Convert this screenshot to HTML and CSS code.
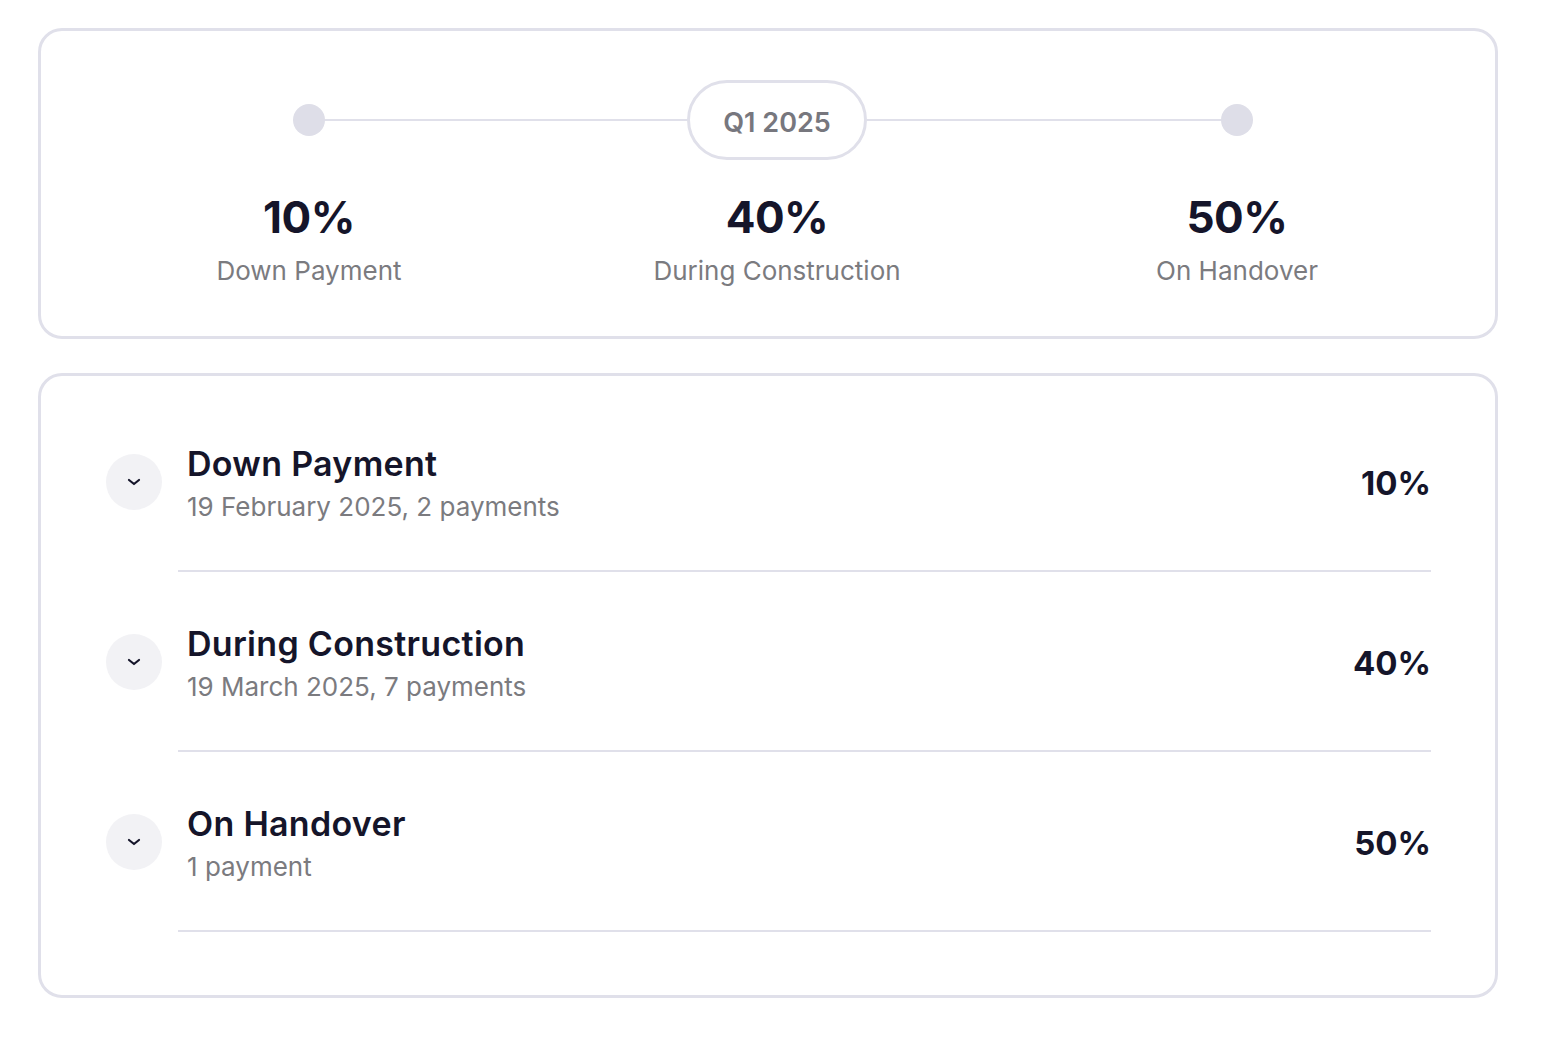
FILE: index.html
```html
<!DOCTYPE html>
<html lang="en">
<head>
<meta charset="utf-8">
<title>Payment plan</title>
<link rel="stylesheet" href="styles.css">
</head>
<body>
<div class="page">
  <section class="card summary">
    <div class="cols">
      <div class="col">
        <div class="track"><span class="seg seg-empty"></span><span class="dot"></span><span class="seg"></span></div>
        <div class="pct">10%</div>
        <div class="lbl">Down Payment</div>
      </div>
      <div class="col">
        <div class="track"><span class="seg"></span><span class="pill">Q1 2025</span><span class="seg"></span></div>
        <div class="pct">40%</div>
        <div class="lbl">During Construction</div>
      </div>
      <div class="col">
        <div class="track"><span class="seg"></span><span class="dot"></span><span class="seg seg-empty"></span></div>
        <div class="pct">50%</div>
        <div class="lbl">On Handover</div>
      </div>
    </div>
  </section>

  <section class="card list">
    <div class="row">
      <span class="chev"><svg width="14" height="8" viewBox="0 0 14 8"><path d="M2 2l5 4 5-4" fill="none" stroke="#15152a" stroke-width="2.2" stroke-linecap="round" stroke-linejoin="round"/></svg></span>
      <div class="row-main">
        <div class="row-text">
          <div class="row-title">Down Payment</div>
          <div class="row-sub">19 February 2025, 2 payments</div>
        </div>
        <div class="row-pct">10%</div>
      </div>
    </div>
    <div class="row">
      <span class="chev"><svg width="14" height="8" viewBox="0 0 14 8"><path d="M2 2l5 4 5-4" fill="none" stroke="#15152a" stroke-width="2.2" stroke-linecap="round" stroke-linejoin="round"/></svg></span>
      <div class="row-main">
        <div class="row-text">
          <div class="row-title">During Construction</div>
          <div class="row-sub">19 March 2025, 7 payments</div>
        </div>
        <div class="row-pct">40%</div>
      </div>
    </div>
    <div class="row">
      <span class="chev"><svg width="14" height="8" viewBox="0 0 14 8"><path d="M2 2l5 4 5-4" fill="none" stroke="#15152a" stroke-width="2.2" stroke-linecap="round" stroke-linejoin="round"/></svg></span>
      <div class="row-main">
        <div class="row-text">
          <div class="row-title">On Handover</div>
          <div class="row-sub">1 payment</div>
        </div>
        <div class="row-pct">50%</div>
      </div>
    </div>
  </section>
</div>
</body>
</html>
```

FILE: styles.css
```css
* { box-sizing: border-box; }
html, body { margin: 0; padding: 0; background: #ffffff; }
body {
  font-family: "Inter", "Liberation Sans", sans-serif;
  color: #15152a;
}
.page {
  padding: 28px 0 0 38px;
  width: 1498px;
  display: flex;
  flex-direction: column;
  gap: 34px;
}
.card {
  border: 3px solid #e0e0ea;
  border-radius: 24px;
  background: #fff;
}
.summary {
  padding: 49px 25px 48px 36px;
}
.cols {
  display: grid;
  grid-template-columns: 464px 472px 448px;
}
.col {
  display: flex;
  flex-direction: column;
  align-items: center;
}
.track {
  width: 100%;
  height: 80px;
  display: flex;
  align-items: center;
}
.seg {
  flex: 1;
  height: 2px;
  background: #e0e0ea;
}
.seg-empty { background: transparent; }
.dot {
  width: 32px;
  height: 32px;
  border-radius: 50%;
  background: #dedee8;
  flex: none;
}
.pill {
  flex: none;
  width: 180px;
  height: 80px;
  border: 3px solid #e0e0ea;
  border-radius: 40px;
  display: flex;
  align-items: center;
  justify-content: center;
  font-size: 27px;
  font-weight: 600;
  color: #77777e;
  padding-top: 4px;
}
.pct {
  margin-top: 29px;
  font-size: 44px;
  line-height: 56px;
  font-weight: 700;
  letter-spacing: -0.5px;
  color: #15152a;
}
.lbl {
  margin-top: 9px;
  font-size: 26px;
  line-height: 34px;
  color: #7b7b7f;
}
.list {
  padding: 16px 64px 63px 65px;
}
.row {
  display: flex;
  align-items: center;
}
.chev {
  flex: none;
  width: 56px;
  height: 56px;
  border-radius: 50%;
  background: #f2f2f5;
  display: flex;
  align-items: center;
  justify-content: center;
  margin-right: 16px;
}
.chev svg { display: block; }
.row-main {
  flex: 1;
  display: flex;
  align-items: center;
  justify-content: space-between;
  padding: 49px 0 45px 9px;
  border-bottom: 2px solid #e0e0ea;
}
.row-title {
  font-size: 34px;
  line-height: 46px;
  font-weight: 600;
  letter-spacing: 0.3px;
  color: #15152a;
}
.row-sub {
  font-size: 26px;
  line-height: 36px;
  padding-top: 2px;
  color: #7b7b7f;
}
.row-pct {
  font-size: 33px;
  font-weight: 700;
  color: #15152a;
}
```
